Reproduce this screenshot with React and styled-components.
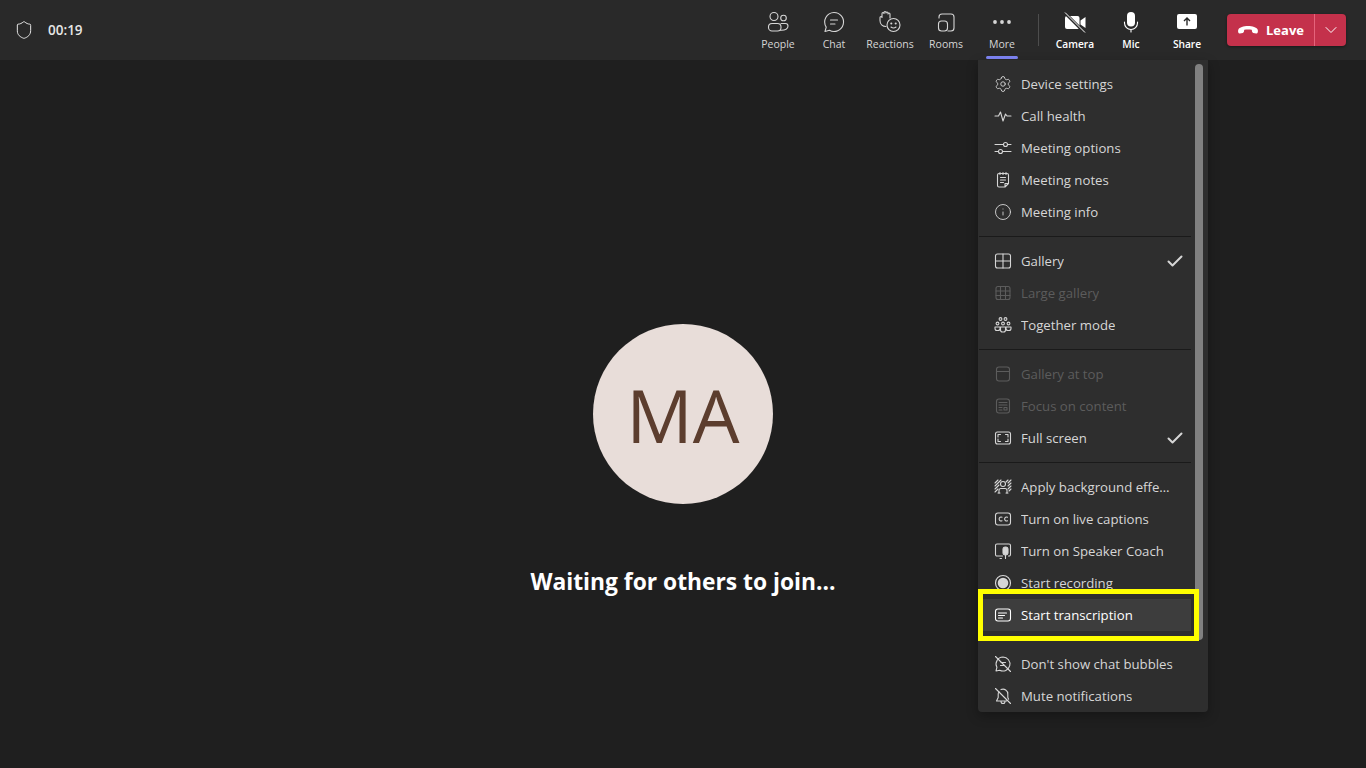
import styled, { createGlobalStyle } from 'styled-components';
import { Settings, Info, Shield, ChevronDown } from 'lucide-react';

const GlobalStyle = createGlobalStyle`
  html, body {
    margin: 0;
    height: 100%;
    background: #1f1f1f;
    font-family: "Open Sans", "Liberation Sans", sans-serif;
  }
  * { box-sizing: border-box; }
`;

const Page = styled.div`
  position: relative;
  height: 100vh;
  display: flex;
  flex-direction: column;
  overflow: hidden;
  background: #1f1f1f;
`;

const TopBar = styled.header`
  height: 60px;
  flex: none;
  display: flex;
  align-items: center;
  padding: 0 20px 0 14px;
  background: #292929;
`;

const Timer = styled.div`
  display: flex;
  align-items: center;
  gap: 14px;
  color: #e6e6e6;
  font-size: 13.5px;
  font-weight: 600;
  margin-right: auto;
`;

const ToolGroup = styled.div`
  display: flex;
`;

const ToolButton = styled.div`
  position: relative;
  width: 56px;
  height: 60px;
  display: flex;
  flex-direction: column;
  align-items: center;
  padding-top: 10px;
  color: ${(p) => (p.$strong ? '#ffffff' : '#d6d6d6')};
  font-size: ${(p) => (p.$strong ? '10.2px' : '10.5px')};
  font-weight: ${(p) => (p.$strong ? 600 : 400)};
  span {
    margin-top: 3px;
    line-height: 14px;
    white-space: nowrap;
  }
`;

const ActiveMark = styled.i`
  position: absolute;
  left: 12px;
  bottom: 1px;
  width: 32px;
  height: 3px;
  border-radius: 2px;
  background: #7f85f5;
`;

const BarDivider = styled.div`
  width: 1px;
  height: 32px;
  margin: 0 8px;
  background: #4d4d4d;
`;

const LeaveButton = styled.div`
  width: 119px;
  height: 32px;
  margin-left: 12px;
  display: flex;
  border-radius: 4px;
  background: #c4314b;
  box-shadow: 0 1px 3px rgba(0, 0, 0, 0.4);
  color: #ffffff;
`;

const LeaveMain = styled.div`
  width: 87px;
  display: flex;
  align-items: center;
  gap: 8px;
  padding-left: 11px;
  font-size: 13px;
  font-weight: 700;
`;

const LeaveArrow = styled.div`
  flex: 1;
  display: flex;
  align-items: center;
  justify-content: center;
  border-left: 1px solid #e5637b;
`;

const Stage = styled.main`
  flex: 1;
  display: flex;
  flex-direction: column;
  align-items: center;
  padding-top: 264px;
`;

const Avatar = styled.div`
  width: 180px;
  height: 180px;
  display: flex;
  align-items: center;
  justify-content: center;
  border-radius: 50%;
  background: #e8ddd9;
  color: #5c3d2e;
  font-size: 74px;
  font-weight: 500;
`;

const Caption = styled.div`
  margin-top: 60px;
  color: #ffffff;
  font-size: 22.8px;
  font-weight: 700;
  line-height: 36px;
`;

const Menu = styled.nav`
  position: absolute;
  top: 60px;
  right: 158px;
  width: 230px;
  height: 652px;
  display: flex;
  padding-left: 1px;
  overflow: hidden;
  border-radius: 0 0 4px 4px;
  background: #2e2e2e;
  box-shadow: 0 4px 12px rgba(0, 0, 0, 0.3);
`;

const MenuList = styled.div`
  width: 212px;
  flex: none;
  padding-top: 8px;
`;

const Thumb = styled.div`
  width: 8px;
  height: 576px;
  margin: 4px 0 0 4px;
  border-radius: 4px;
  background: #808080;
`;

const MenuDivider = styled.div`
  height: 1px;
  margin: 8px 0;
  background: #1a1a1a;
`;

const Row = styled.div`
  position: relative;
  height: 32px;
  display: flex;
  align-items: center;
  padding: 0 7px 0 15px;
  gap: 9px;
  font-size: 13.2px;
  background: ${(p) => (p.$hover ? '#3d3d3d' : 'transparent')};
  color: ${(p) => (p.$disabled ? '#5c5c5c' : p.$hover ? '#ffffff' : '#d6d6d6')};
  svg { flex: none; }
`;

const Label = styled.span`
  max-width: 152px;
  overflow: hidden;
  white-space: nowrap;
  text-overflow: ellipsis;
`;

const Tick = styled.span`
  margin-left: auto;
  display: flex;
  color: #d6d6d6;
`;

const Outline = styled.div`
  position: absolute;
  top: -10px;
  bottom: -10px;
  left: -1px;
  right: -8px;
  border: 5px solid #ffff00;
  pointer-events: none;
`;

const Glyph = ({ size = 18, children }) => (
  <svg width={size} height={size} viewBox={`0 0 ${size} ${size}`} fill="none" stroke="currentColor" strokeWidth="1.1" strokeLinecap="round" strokeLinejoin="round">
    {children}
  </svg>
);

const toolIcons = {
  people: (
    <Glyph size={24}>
      <circle cx="8" cy="6.5" r="4" />
      <circle cx="17.5" cy="8" r="2.8" />
      <rect x="2.5" y="13.5" width="12.5" height="7.5" rx="3.5" />
      <path d="M15 13.5h4.5a2.5 2.5 0 0 1 2.5 2.500c0 2.800-2.500 4.400-7.500 4.200" />
    </Glyph>
  ),
  chat: (
    <Glyph size={24}>
      <path d="M12 2.500a9.500 9.500 0 1 1-4.600 17.800L3 21.500l1.200-4.400A9.500 9.500 0 0 1 12 2.500z" />
      <path d="M8.500 10h7M8.500 14h4.500" />
    </Glyph>
  ),
  reactions: (
    <Glyph size={24}>
      <path d="M8 16.500c-3.500 0-6-2.500-6-6V7.500a1 1 0 0 1 2 0V3.500a1 1 0 0 1 2 0V2.500a1 1 0 0 1 2 0v.500a1 1 0 0 1 2 0v1a1 1 0 0 1 2 0v4" />
      <circle cx="15.500" cy="15" r="6.500" />
      <circle cx="13.300" cy="13.500" r=".5" />
      <circle cx="17.700" cy="13.500" r=".5" />
      <path d="M13 17c1.500 1.200 3.500 1.200 5 0" />
    </Glyph>
  ),
  rooms: (
    <Glyph size={24}>
      <path d="M5 8V7a3 3 0 0 1 3-3h9a3 3 0 0 1 3 3v11a3 3 0 0 1-3 3h-3" />
      <rect x="4.500" y="11" width="9" height="10" rx="3" />
    </Glyph>
  ),
  more: (
    <svg width="24" height="24" viewBox="0 0 24 24" fill="currentColor">
      <circle cx="5" cy="12" r="1.900" />
      <circle cx="12" cy="12" r="1.900" />
      <circle cx="19" cy="12" r="1.900" />
    </svg>
  ),
  camera: (
    <svg width="24" height="24" viewBox="0 0 24 24" fill="currentColor">
      <rect x="2" y="6" width="14.500" height="13" rx="2" />
      <path d="M17.500 10.500l5-3.500v11l-5-3.500z" />
      <path d="M2 3l19 19" stroke="#292929" strokeWidth="3" />
      <path d="M2 2.500l20 20" stroke="currentColor" strokeWidth="1" />
    </svg>
  ),
  mic: (
    <svg width="24" height="24" viewBox="0 0 24 24" fill="currentColor">
      <rect x="8" y="2" width="8" height="14.500" rx="4" />
      <path d="M5.500 12v1a6.500 6.500 0 0 0 13 0v-1M12 19.500V22" fill="none" stroke="currentColor" strokeWidth="1.100" strokeLinecap="round" />
    </svg>
  ),
  share: (
    <svg width="24" height="24" viewBox="0 0 24 24" fill="currentColor">
      <rect x="2" y="4" width="20" height="15" rx="2" />
      <path d="M12 15.500V8.500M9 11l3-3 3 3" fill="none" stroke="#292929" strokeWidth="1.400" />
    </svg>
  ),
};

const menuIcons = {
  settings: <Settings size={18} strokeWidth={1.2} />,
  health: (
    <Glyph>
      <path d="M1 9h3.500l2-4 2.500 9 2.500-7 1.500 2H17" />
    </Glyph>
  ),
  options: (
    <Glyph>
      <path d="M1 5.500h8.500M13.500 5.500H17M1 12.500h3.500M8.500 12.500H17" />
      <circle cx="11.500" cy="5.500" r="2" />
      <circle cx="6.500" cy="12.500" r="2" />
    </Glyph>
  ),
  notes: (
    <Glyph>
      <path d="M11 16H5a1.500 1.500 0 0 1-1.500-1.500V4A1.500 1.500 0 0 1 5 2.500h8A1.500 1.500 0 0 1 14.500 4v8.500L11 16zM11 16v-3.500h3.500" />
      <path d="M6 1.500v2M9 1.500v2M12 1.500v2M6.500 6.500h5M6.500 9h5M6.500 11.500h3" />
    </Glyph>
  ),
  info: <Info size={18} strokeWidth={1.2} />,
  gallery: (
    <Glyph>
      <rect x="1.500" y="2" width="15" height="14" rx="2" />
      <path d="M9 2v14M1.500 9h15" />
    </Glyph>
  ),
  large: (
    <Glyph>
      <rect x="2" y="2.500" width="14" height="13" rx="2" />
      <path d="M6.500 2.500v13M11.500 2.500v13M2 7h14M2 11.500h14" />
    </Glyph>
  ),
  together: (
    <Glyph>
      <circle cx="6.500" cy="3" r="1.400" />
      <circle cx="11.500" cy="3" r="1.400" />
      <circle cx="3.500" cy="7.500" r="1.400" />
      <circle cx="9" cy="7.500" r="1.400" />
      <circle cx="14.500" cy="7.500" r="1.400" />
      <path d="M1 11h5v1.500a2 2 0 0 1-2 2H3a2 2 0 0 1-2-2zM6.500 11h5v3a2 2 0 0 1-2 2h-1a2 2 0 0 1-2-2zM12 11h5v1.500a2 2 0 0 1-2 2h-1a2 2 0 0 1-2-2z" />
    </Glyph>
  ),
  top: (
    <Glyph>
      <rect x="2.500" y="2" width="13" height="14" rx="2.500" />
      <path d="M2.500 6.500h13" />
    </Glyph>
  ),
  focus: (
    <Glyph>
      <rect x="2.500" y="2" width="13" height="14" rx="2.500" />
      <path d="M5 5.500h8M5 8h8" />
      <rect x="10" y="10.500" width="3" height="2.500" />
      <path d="M5 10.500h3M5 13h3" />
    </Glyph>
  ),
  fullscreen: (
    <Glyph>
      <rect x="1.500" y="3" width="15" height="12" rx="2" />
      <path d="M4 8V5.500h2.500M11.500 5.500H14V8M14 10v2.500h-2.500M6.500 12.500H4V10" />
    </Glyph>
  ),
  background: (
    <Glyph>
      <path d="M1 5l3-3M1 8l6-6M1 11l4-4M1 14l3-3M14 2l-2 2M17 2l-3 3M17 5l-3 3M17 8l-3 3M17 11l-2 2M6 15h-2M14 15h-2" />
      <circle cx="9" cy="6" r="2.500" />
      <path d="M5 15v-2.500A2 2 0 0 1 7 10.500h4a2 2 0 0 1 2 2V15" />
    </Glyph>
  ),
  captions: (
    <Glyph>
      <rect x="1.500" y="3" width="15" height="12" rx="2.500" />
      <path d="M8 7.200a2 2 0 1 0 0 3.600M13.500 7.200a2 2 0 1 0 0 3.600" />
    </Glyph>
  ),
  coach: (
    <Glyph>
      <path d="M8.500 14H3a1.500 1.500 0 0 1-1.500-1.500v-9A1.500 1.500 0 0 1 3 2h12a1.500 1.500 0 0 1 1.500 1.500v9A1.500 1.500 0 0 1 15 14h-.5M6 16.500h1.500" />
      <rect x="9" y="5" width="5" height="8" rx="2.400" fill="currentColor" />
      <path d="M11.500 13v3.500" />
    </Glyph>
  ),
  record: (
    <svg width="18" height="18" viewBox="0 0 18 18" fill="currentColor">
      <circle cx="9" cy="9" r="7.500" fill="none" stroke="currentColor" strokeWidth="1.200" />
      <circle cx="9" cy="9" r="5.300" />
    </svg>
  ),
  transcript: (
    <Glyph>
      <rect x="1.500" y="3" width="15" height="12" rx="2.500" />
      <path d="M4.500 7h8M4.500 9.500h6M4.500 12h4" />
    </Glyph>
  ),
  bubbles: (
    <Glyph>
      <path d="M9 2a7 7 0 1 1-3.300 13.200L2 16l.900-3.700A7 7 0 0 1 9 2z" />
      <path d="M1.500 1.500l15 15M7 7.500h4.500M6.500 10.500h3" />
    </Glyph>
  ),
  mute: (
    <Glyph>
      <path d="M5 4.500a4.700 4.700 0 0 0-.800 2.700v3.300L2.500 14H12.500M7 2.600A4.800 4.800 0 0 1 13.800 7.200v3.300l.800 1.700M7 14.500a2 2 0 0 0 4 0M1.500 1.500l15 15" />
    </Glyph>
  ),
};

const CheckMark = () => (
  <svg width="18" height="18" viewBox="0 0 18 18" fill="none" stroke="currentColor" strokeWidth="2" strokeLinecap="round" strokeLinejoin="round">
    <path d="M2.500 9.500l4 4 9-9" />
  </svg>
);

const menuGroups = [
  [
    { icon: 'settings', label: 'Device settings' },
    { icon: 'health', label: 'Call health' },
    { icon: 'options', label: 'Meeting options' },
    { icon: 'notes', label: 'Meeting notes' },
    { icon: 'info', label: 'Meeting info' },
  ],
  [
    { icon: 'gallery', label: 'Gallery', checked: true },
    { icon: 'large', label: 'Large gallery', disabled: true },
    { icon: 'together', label: 'Together mode' },
  ],
  [
    { icon: 'top', label: 'Gallery at top', disabled: true },
    { icon: 'focus', label: 'Focus on content', disabled: true },
    { icon: 'fullscreen', label: 'Full screen', checked: true },
  ],
  [
    { icon: 'background', label: 'Apply background effects' },
    { icon: 'captions', label: 'Turn on live captions' },
    { icon: 'coach', label: 'Turn on Speaker Coach' },
    { icon: 'record', label: 'Start recording' },
    { icon: 'transcript', label: 'Start transcription', hover: true },
  ],
  [
    { icon: 'bubbles', label: "Don't show chat bubbles" },
    { icon: 'mute', label: 'Mute notifications' },
  ],
];

const App = () => {
  return (
    <Page>
      <GlobalStyle />
      <TopBar>
        <Timer>
          <Shield size={20} strokeWidth={1.2} />
          00:19
        </Timer>
        <ToolGroup>
          <ToolButton>{toolIcons.people}<span>People</span></ToolButton>
          <ToolButton>{toolIcons.chat}<span>Chat</span></ToolButton>
          <ToolButton>{toolIcons.reactions}<span>Reactions</span></ToolButton>
          <ToolButton>{toolIcons.rooms}<span>Rooms</span></ToolButton>
          <ToolButton>{toolIcons.more}<span>More</span><ActiveMark /></ToolButton>
        </ToolGroup>
        <BarDivider />
        <ToolGroup>
          <ToolButton $strong>{toolIcons.camera}<span>Camera</span></ToolButton>
          <ToolButton $strong>{toolIcons.mic}<span>Mic</span></ToolButton>
          <ToolButton $strong>{toolIcons.share}<span>Share</span></ToolButton>
        </ToolGroup>
        <LeaveButton>
          <LeaveMain>
            <svg width="20" height="8" viewBox="0 0 20 8" fill="currentColor">
              <path d="M10 0C5.500 0 1.500 1.500.5 3.200c-.5 1-.5 2.300-.2 3.300.2.700.8 1 1.500.9l3-.5c.7-.1 1.100-.6 1.200-1.300l.2-1.800c1.600-.5 6-.5 7.600 0l.2 1.800c.1.700.5 1.200 1.200 1.300l3 .5c.7.100 1.300-.2 1.500-.9.300-1 .3-2.300-.2-3.300C18.500 1.500 14.500 0 10 0z" />
            </svg>
            Leave
          </LeaveMain>
          <LeaveArrow>
            <ChevronDown size={20} strokeWidth={1.2} />
          </LeaveArrow>
        </LeaveButton>
      </TopBar>
      <Stage>
        <Avatar>MA</Avatar>
        <Caption>Waiting for others to join...</Caption>
      </Stage>
      <Menu>
        <MenuList>
          {menuGroups.map((group, i) => (
            <div key={i}>
              {i > 0 && <MenuDivider />}
              {group.map((item) => (
                <Row key={item.label} $disabled={item.disabled} $hover={item.hover}>
                  {menuIcons[item.icon]}
                  <Label>{item.label}</Label>
                  {item.checked && (
                    <Tick>
                      <CheckMark />
                    </Tick>
                  )}
                  {item.hover && <Outline />}
                </Row>
              ))}
            </div>
          ))}
        </MenuList>
        <Thumb />
      </Menu>
    </Page>
  );
};

export default App;
